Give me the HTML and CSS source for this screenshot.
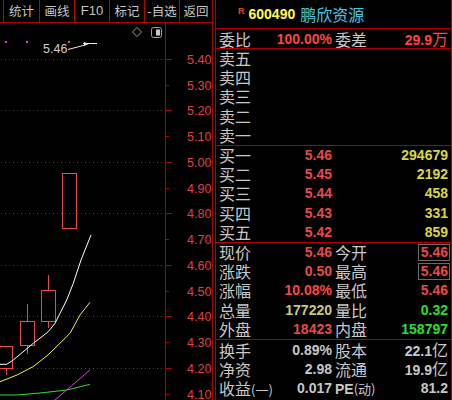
FILE: index.html
```html
<!DOCTYPE html>
<html lang="zh-CN">
<head>
<meta charset="utf-8">
<title>600490 鹏欣资源</title>
<link rel="stylesheet" href="styles.css">
</head>
<body>
<div class="app">
  <div class="left">
    <div class="toolbar">
      <div class="tb-btn">统计</div>
      <div class="tb-btn">画线</div>
      <div class="tb-btn tb-latin">F10</div>
      <div class="tb-btn">标记</div>
      <div class="tb-btn">-自选</div>
      <div class="tb-btn tb-last">返回</div>
    </div>
    <svg class="chart" width="212" height="377" viewBox="0 23 212 377" xmlns="http://www.w3.org/2000/svg">
      <!-- grid dotted lines -->
      <g stroke="#b01818" stroke-width="1" stroke-dasharray="1 3">
        <line x1="1" y1="59.5" x2="165" y2="59.5"/>
        <line x1="1" y1="110.5" x2="165" y2="110.5"/>
        <line x1="1" y1="162.5" x2="165" y2="162.5"/>
        <line x1="1" y1="213.5" x2="165" y2="213.5"/>
        <line x1="1" y1="265.5" x2="165" y2="265.5"/>
        <line x1="1" y1="316.5" x2="165" y2="316.5"/>
        <line x1="1" y1="368.5" x2="165" y2="368.5"/>
      </g>
      <!-- axis -->
      <g stroke="#b00000" stroke-width="1">
        <line x1="165.5" y1="23" x2="165.5" y2="400"/>
        <line x1="165" y1="59.5" x2="172" y2="59.5"/>
        <line x1="165" y1="85.5" x2="169" y2="85.5"/>
        <line x1="165" y1="110.5" x2="172" y2="110.5"/>
        <line x1="165" y1="136.5" x2="169" y2="136.5"/>
        <line x1="165" y1="162.5" x2="172" y2="162.5"/>
        <line x1="165" y1="188.5" x2="169" y2="188.5"/>
        <line x1="165" y1="213.5" x2="172" y2="213.5"/>
        <line x1="165" y1="239.5" x2="169" y2="239.5"/>
        <line x1="165" y1="265.5" x2="172" y2="265.5"/>
        <line x1="165" y1="291.5" x2="169" y2="291.5"/>
        <line x1="165" y1="316.5" x2="172" y2="316.5"/>
        <line x1="165" y1="342.5" x2="169" y2="342.5"/>
        <line x1="165" y1="368.5" x2="172" y2="368.5"/>
        <line x1="165" y1="394.5" x2="169" y2="394.5"/>
      </g>
      <g class="axis-label" fill="#e04040" font-size="12.5">
        <text x="187" y="64">5.40</text>
        <text x="187" y="90">5.30</text>
        <text x="187" y="115">5.20</text>
        <text x="187" y="141">5.10</text>
        <text x="187" y="167">5.00</text>
        <text x="187" y="193">4.90</text>
        <text x="187" y="218">4.80</text>
        <text x="187" y="244">4.70</text>
        <text x="187" y="270">4.60</text>
        <text x="187" y="296">4.50</text>
        <text x="187" y="321">4.40</text>
        <text x="187" y="347">4.30</text>
        <text x="187" y="373">4.20</text>
        <text x="187" y="399">4.10</text>
      </g>
      <!-- top icons -->
      <path d="M137 27.5 L141.5 32 L137 36.5 L132.5 32 Z" fill="none" stroke="#a0a0a0" stroke-width="1"/>
      <rect x="151.5" y="27.5" width="10" height="10" rx="2" fill="none" stroke="#a0a0a0" stroke-width="1"/>
      <rect x="156" y="29.5" width="4" height="6" fill="#c8c8c8"/>
      <!-- marker dots -->
      <g fill="#e040e0">
        <rect x="5" y="41" width="2" height="2"/>
        <rect x="26" y="41" width="2" height="2"/>
        <rect x="68" y="41" width="2" height="2"/>
      </g>
      <text class="price-tag" x="43" y="53" fill="#d0d0d0" font-size="12.5">5.46</text>
      <g stroke="#e8e8e8" stroke-width="1" fill="none">
        <polyline points="68,49.5 85,45"/>
        <line x1="83" y1="43.5" x2="97" y2="43.5"/>
      </g>
      <path d="M84 42 L89 44 L84 46 Z" fill="#e8e8e8"/>
      <!-- candles -->
      <g stroke="#f04848" stroke-width="1" fill="none">
        <rect x="-0.5" y="346.5" width="13" height="22"/>
        <line x1="6.5" y1="369" x2="6.5" y2="375"/>
        <rect x="20.5" y="321.5" width="14" height="24"/>
        <line x1="27.5" y1="304" x2="27.5" y2="321"/>
        <line x1="27.5" y1="346" x2="27.5" y2="354"/>
        <rect x="41.5" y="290.5" width="14" height="31"/>
        <line x1="48.5" y1="275" x2="48.5" y2="290"/>
        <line x1="48.5" y1="322" x2="48.5" y2="328"/>
        <rect x="62.5" y="173.5" width="14" height="55"/>
      </g>
      <!-- moving averages -->
      <polyline fill="none" stroke="#ffffff" stroke-width="1" points="0,364.3 6.7,364.3 13.3,360 33.3,343.3 48.3,331.7 55,323.3 66.7,300 73.3,283.3 81,260 91,235"/>
      <polyline fill="none" stroke="#f0f040" stroke-width="1" points="0,381.7 17,375 33,366.7 48,355 70,333.3 80,315 90,302.3"/>
      <polyline fill="none" stroke="#30e030" stroke-width="1" points="0,395 17,395 43,392.7 67,390 90,384.3"/>
      <polyline fill="none" stroke="#e040e0" stroke-width="1" points="55,400 90,370"/>
    </svg>
  </div>
  <div class="panel">
    <div class="header">
      <span class="badge">R</span>
      <span class="code">600490</span>
      <span class="name">鹏欣资源</span>
    </div>
    <div class="row row-single">
      <span class="lbl">委比</span>
      <span class="val red-b">100.00%</span>
      <span class="lbl2">委差</span>
      <span class="val red-b">29.9<span class="unit">万</span></span>
    </div>
    <div class="section">
      <div class="row"><span class="lbl">卖五</span></div>
      <div class="row"><span class="lbl">卖四</span></div>
      <div class="row"><span class="lbl">卖三</span></div>
      <div class="row"><span class="lbl">卖二</span></div>
      <div class="row"><span class="lbl">卖一</span></div>
    </div>
    <div class="section">
      <div class="row"><span class="lbl">买一</span><span class="val red">5.46</span><span class="lbl2"></span><span class="val yellow">294679</span></div>
      <div class="row"><span class="lbl">买二</span><span class="val red">5.45</span><span class="lbl2"></span><span class="val yellow">2192</span></div>
      <div class="row"><span class="lbl">买三</span><span class="val red">5.44</span><span class="lbl2"></span><span class="val yellow">458</span></div>
      <div class="row"><span class="lbl">买四</span><span class="val red">5.43</span><span class="lbl2"></span><span class="val yellow">331</span></div>
      <div class="row"><span class="lbl">买五</span><span class="val red">5.42</span><span class="lbl2"></span><span class="val yellow">859</span></div>
    </div>
    <div class="section">
      <div class="row"><span class="lbl">现价</span><span class="val red">5.46</span><span class="lbl2">今开</span><span class="val"><span class="boxed red">5.46</span></span></div>
      <div class="row"><span class="lbl">涨跌</span><span class="val red">0.50</span><span class="lbl2">最高</span><span class="val"><span class="boxed red">5.46</span></span></div>
      <div class="row"><span class="lbl">涨幅</span><span class="val red-b">10.08%</span><span class="lbl2">最低</span><span class="val red">5.46</span></div>
      <div class="row"><span class="lbl">总量</span><span class="val pale">177220</span><span class="lbl2">量比</span><span class="val green">0.32</span></div>
      <div class="row"><span class="lbl">外盘</span><span class="val red">18423</span><span class="lbl2">内盘</span><span class="val green">158797</span></div>
    </div>
    <div class="section section-last">
      <div class="row"><span class="lbl">换手</span><span class="val gray">0.89%</span><span class="lbl2">股本</span><span class="val gray">22.1<span class="unit">亿</span></span></div>
      <div class="row"><span class="lbl">净资</span><span class="val gray">2.98</span><span class="lbl2">流通</span><span class="val gray">19.9<span class="unit">亿</span></span></div>
      <div class="row"><span class="lbl">收益<span class="paren">(一)</span></span><span class="val gray">0.017</span><span class="lbl2"><span class="latin">PE</span><span class="paren">(动)</span></span><span class="val gray">81.2</span></div>
    </div>
  </div>
</div>
</body>
</html>
```
FILE: styles.css
```css
html, body {
  margin: 0;
  padding: 0;
  background: #000;
}

body {
  width: 452px;
  height: 400px;
  overflow: hidden;
  font-family: "Noto Sans CJK SC", "DejaVu Sans", sans-serif;
}

.app {
  display: flex;
  width: 452px;
  height: 400px;
}

.left {
  width: 212px;
  height: 400px;
  border-right: 1px solid #b00000;
  display: flex;
  flex-direction: column;
}

.toolbar {
  display: grid;
  grid-template-columns: 36px 35px 35px 35px 35px 33px;
  padding-left: 3px;
  height: 22px;
  border-bottom: 1px solid #b00000;
}

.tb-btn {
  border-left: 1px solid #c00000;
  color: #c8c8c8;
  font-size: 12.5px;
  line-height: 22px;
  text-align: center;
  white-space: nowrap;
}

.tb-latin {
  font-family: "Liberation Sans", sans-serif;
  font-size: 13px;
}

.chart {
  display: block;
}

.axis-label text,
.price-tag {
  font-family: "Liberation Sans", sans-serif;
}

.panel {
  margin-left: 2px;
  width: 235px;
  height: 400px;
  border-left: 1px solid #b00000;
  border-right: 1px solid #b00000;
  display: flex;
  flex-direction: column;
}

.header {
  height: 28px;
  border-bottom: 1px solid #b00000;
  display: flex;
  align-items: center;
  padding-left: 22px;
}

.badge {
  color: #e04040;
  font-family: "Liberation Sans", sans-serif;
  font-weight: bold;
  font-size: 9px;
  align-self: flex-start;
  margin-top: 6px;
  margin-right: 4px;
}

.code {
  color: #ffff40;
  font-family: "Liberation Sans", sans-serif;
  font-weight: bold;
  font-size: 14px;
  margin-right: 5px;
}

.name {
  color: #40c8e8;
  font-size: 16px;
}

.row {
  display: grid;
  grid-template-columns: 50px 63px 53px 1fr;
  align-items: center;
  height: 19.2px;
  padding: 0 3px 0 3px;
  line-height: 19px;
  white-space: nowrap;
}

.row-single {
  height: 19px;
  border-bottom: 1px solid #b00000;
}

.section {
  height: 96px;
  border-bottom: 1px solid #b00000;
  display: flex;
  flex-direction: column;
}

.section-last {
  border-bottom: none;
  height: auto;
}

.lbl,
.lbl2 {
  color: #c8c8c8;
  font-size: 16px;
}

.lbl2 {
  padding-left: 3px;
}

.paren {
  font-size: 13px;
}

.latin {
  font-family: "Liberation Sans", sans-serif;
  font-weight: bold;
  font-size: 14px;
}

.val {
  text-align: right;
  font-family: "Liberation Sans", sans-serif;
  font-weight: bold;
  font-size: 14px;
}

.unit {
  font-family: "Noto Sans CJK SC", sans-serif;
  font-weight: normal;
  font-size: 16px;
}

.red { color: #e84a4a; }
.red-b { color: #ff4444; }
.yellow { color: #d8d840; }
.pale { color: #c8c880; }
.green { color: #28e028; }
.gray { color: #c8c8c8; }

.boxed {
  display: inline-block;
  border: 1px solid #6a6a6a;
  line-height: 15px;
  padding: 0 1px 0 2px;
  margin-right: -2px;
}
```
